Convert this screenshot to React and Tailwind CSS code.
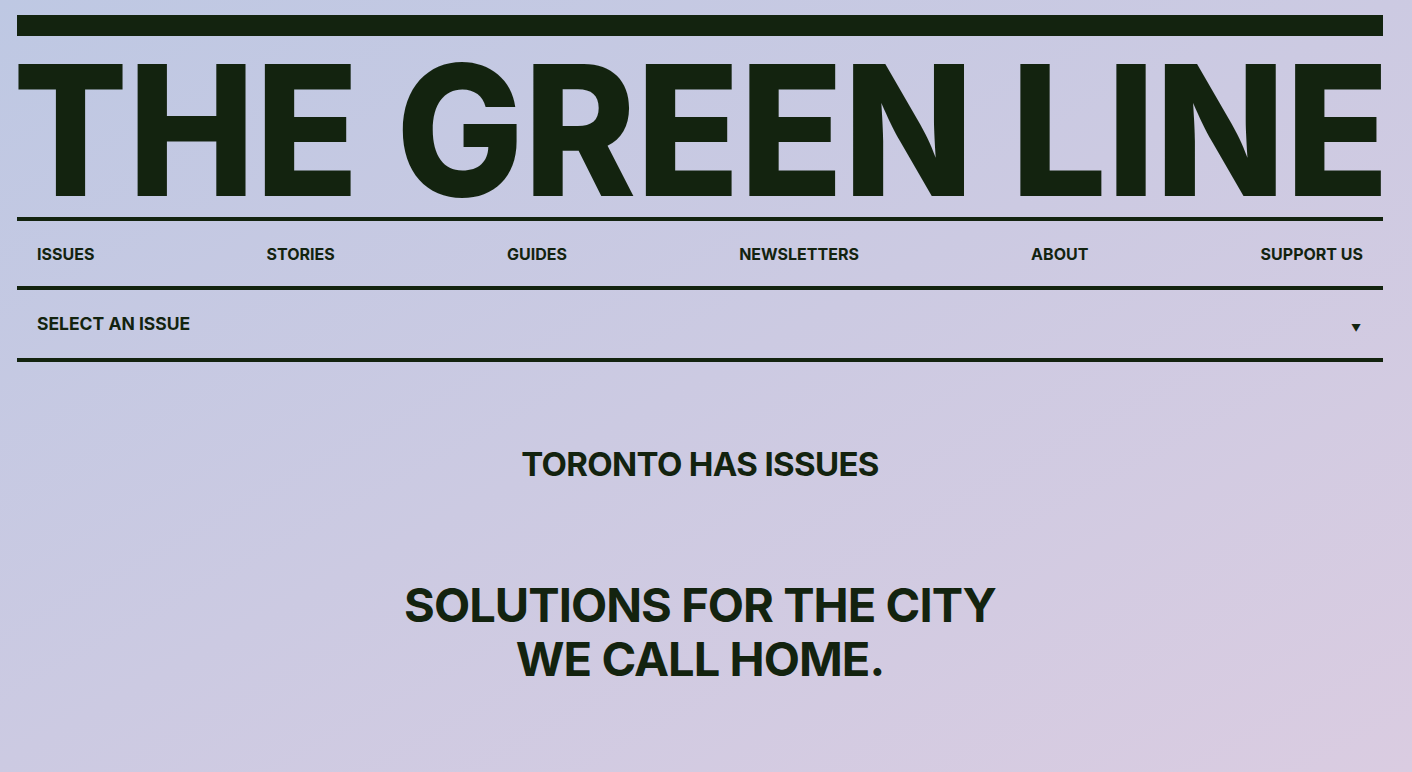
import React from 'react';

const navItems = ['ISSUES', 'STORIES', 'GUIDES', 'NEWSLETTERS', 'ABOUT', 'SUPPORT US'];

// masthead wordmark, stretched to the column width
const Masthead = () => (
  <svg
    viewBox="-10 -8 1386 148"
    className="block w-[calc(100%+20px)] -mx-[10px] h-[148px] mt-[20px]"
    aria-label="The Green Line"
  >
    <text
      x="-4"
      y="132"
      textLength="1376"
      lengthAdjust="spacingAndGlyphs"
      fill="#13230f"
      style={{ fontFamily: 'Inter, sans-serif', fontWeight: 800, fontSize: '181.5px' }}
    >
      THE GREEN LINE
    </text>
  </svg>
);

export default function App() {
  return (
    <div className="min-h-[772px] w-full bg-gradient-to-br from-[#bec8e3] to-[#dacce1] text-[#13230f] font-['Inter',sans-serif]">
      <div className="pl-[17px] pr-[29px] pt-[15px]">
        {/* Header */}
        <div className="h-[21px] bg-[#13230f]" />
        <Masthead />

        <nav className="mt-[13px] border-t-4 border-[#13230f]">
          <ul className="flex items-center justify-between h-[65px] px-5">
            {navItems.map((item) => (
              <li key={item} className="text-[16px] font-bold tracking-normal leading-none">
                {item}
              </li>
            ))}
          </ul>
        </nav>

        <div className="border-t-4 border-b-4 border-[#13230f]">
          <div className="flex items-center justify-between h-[68px] px-5">
            <span className="text-[17.5px] font-bold tracking-normal leading-none">SELECT AN ISSUE</span>
            <span className="text-[10px] leading-none mt-2 mr-[2px]">▼</span>
          </div>
        </div>

        {/* Hero */}
        <div className="flex flex-col items-center text-center">
          <h2 className="mt-[86px] text-[33px] font-bold leading-none tracking-[-0.02em]">TORONTO HAS ISSUES</h2>
          <h1 className="mt-[97px] text-[47px] font-bold leading-[54px] tracking-[-0.02em]">
            SOLUTIONS FOR THE CITY
            <br />
            WE CALL HOME.
          </h1>
        </div>
      </div>
    </div>
  );
}
